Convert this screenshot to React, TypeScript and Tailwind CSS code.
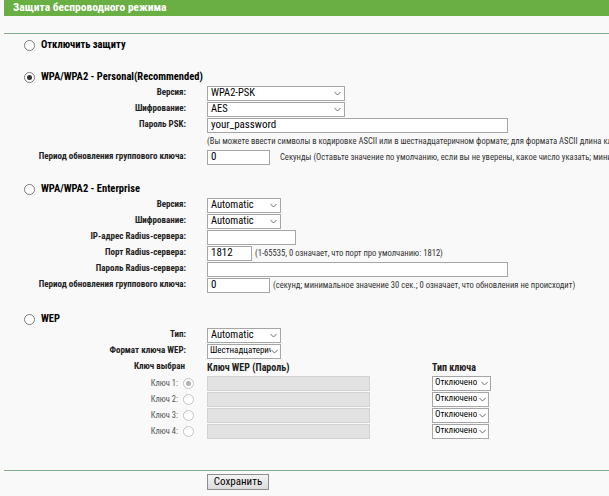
import type { ReactNode } from "react";

function Radio({ checked, disabled }: { checked?: boolean; disabled?: boolean }) {
  return (
    <span
      className={`flex h-[11px] w-[11px] flex-shrink-0 items-center justify-center rounded-full border bg-white ${
        disabled ? "border-[#c4c4c4]" : "border-[#7a7a7a]"
      }`}
    >
      {checked && <span className={`h-[5px] w-[5px] rounded-full ${disabled ? "bg-[#b0b0b0]" : "bg-[#333]"}`} />}
    </span>
  );
}

function Chevron() {
  return (
    <svg width="7" height="5" viewBox="0 0 7 5" className="flex-shrink-0">
      <path d="M0.5 1 L3.5 4 L6.5 1" fill="none" stroke="#6b6b6b" strokeWidth="1" />
    </svg>
  );
}

function Select({ value, width, small }: { value: string; width: string; small?: boolean }) {
  return (
    <div
      className={`flex h-[15px] items-center justify-between overflow-hidden border border-[#a6a6a6] bg-white text-black ${
        small ? "pl-[2px] pr-[2px] text-[9px]" : "pl-[3px] pr-[3px] text-[10.5px]"
      } ${width}`}
    >
      <span className="min-w-0 overflow-hidden whitespace-nowrap">{value}</span>
      <Chevron />
    </div>
  );
}

function Input({ value, width, disabled }: { value?: string; width: string; disabled?: boolean }) {
  return (
    <div
      className={`flex h-[15px] flex-shrink-0 items-center border pl-[3px] text-[11px] text-black ${width} ${
        disabled ? "border-[#d2d2d2] bg-[#e2e2e2]" : "border-[#a6a6a6] bg-white"
      }`}
    >
      {value}
    </div>
  );
}

function Row({ label, children }: { label?: ReactNode; children?: ReactNode }) {
  return (
    <div className="flex h-4 items-center whitespace-nowrap">
      <div className="w-[186px] flex-shrink-0 text-right text-[9px] font-bold text-[#222]">{label}</div>
      <div className="ml-[21px] flex items-center">{children}</div>
    </div>
  );
}

function Hint({ children, className = "" }: { children: ReactNode; className?: string }) {
  return <span className={`text-[8.6px] text-[#333] ${className}`}>{children}</span>;
}

function SectionTitle({ checked, children }: { checked?: boolean; children: ReactNode }) {
  return (
    <div className="flex h-4 items-center gap-[6px] pl-[24px] text-[10.5px] font-bold text-black">
      <Radio checked={checked} />
      <span>{children}</span>
    </div>
  );
}

function WepKey({ n, checked }: { n: number; checked?: boolean }) {
  return (
    <div className="flex h-4 items-center whitespace-nowrap">
      <div className="flex w-[194px] flex-shrink-0 items-center justify-end gap-[5px] text-[8.5px] text-[#555]">
        <span>Ключ {n}:</span>
        <Radio checked={checked} disabled />
      </div>
      <div className="ml-[13px] flex items-center">
        <Input width="w-[163px]" disabled />
        <div className="ml-[62px]">
          <Select value="Отключено" small width={n === 1 ? "w-[59px]" : "w-[57px]"} />
        </div>
      </div>
    </div>
  );
}

export default function App() {
  return (
    <div className="h-[496px] w-[609px] overflow-hidden bg-[#f9f9f9] font-['Roboto_Condensed','Liberation_Sans',sans-serif]">
      <div className="ml-1 flex h-4 items-center bg-[#6aaf43] pl-[9px] text-[11.5px] font-bold text-white">
        Защита беспроводного режима
      </div>
      <div className="ml-1 mt-[17px] border-t border-[#7fae8e]" />

      <div className="mt-[3px]">
        <SectionTitle>Отключить защиту</SectionTitle>
      </div>

      <div className="mt-4">
        <SectionTitle checked>WPA/WPA2 - Personal(Recommended)</SectionTitle>
        <Row label="Версия:">
          <Select value="WPA2-PSK" width="w-[138px]" />
        </Row>
        <Row label="Шифрование:">
          <Select value="AES" width="w-[138px]" />
        </Row>
        <Row label="Пароль PSK:">
          <Input value="your_password" width="w-[301px]" />
        </Row>
        <Row>
          <Hint>
            (Вы можете ввести символы в кодировке ASCII или в шестнадцатеричном формате; для формата ASCII длина ключа
            должна быть от 8 до 63 символов)
          </Hint>
        </Row>
        <Row label="Период обновления группового ключа:">
          <Input value="0" width="w-[63px]" />
          <Hint className="ml-[10px]">
            Секунды (Оставьте значение по умолчанию, если вы не уверены, какое число указать; минимальное значение 30)
          </Hint>
        </Row>
      </div>

      <div className="mt-4">
        <SectionTitle>WPA/WPA2 - Enterprise</SectionTitle>
        <Row label="Версия:">
          <Select value="Automatic" width="w-[74px]" />
        </Row>
        <Row label="Шифрование:">
          <Select value="Automatic" width="w-[74px]" />
        </Row>
        <Row label="IP-адрес Radius-сервера:">
          <Input width="w-[89px]" />
        </Row>
        <Row label="Порт Radius-сервера:">
          <Input value="1812" width="w-[45px]" />
          <Hint className="ml-[3px]">(1-65535, 0 означает, что порт про умолчанию: 1812)</Hint>
        </Row>
        <Row label="Пароль Radius-сервера:">
          <Input width="w-[301px]" />
        </Row>
        <Row label="Период обновления группового ключа:">
          <Input value="0" width="w-[63px]" />
          <Hint className="ml-[3px]">
            (секунд; минимальное значение 30 сек.; 0 означает, что обновления не происходит)
          </Hint>
        </Row>
      </div>

      <div className="mt-[18px]">
        <SectionTitle>WEP</SectionTitle>
        <Row label="Тип:">
          <Select value="Automatic" width="w-[74px]" />
        </Row>
        <Row label="Формат ключа WEP:">
          <Select value="Шестнадцатеричный" small width="w-[74px]" />
        </Row>
        <div className="flex h-4 items-center whitespace-nowrap font-bold text-[#222]">
          <div className="w-[185px] flex-shrink-0 text-right text-[9px]">Ключ выбран</div>
          <div className="ml-[22px] w-[225px] text-[10px]">Ключ WEP (Пароль)</div>
          <div className="text-[10px]">Тип ключа</div>
        </div>
        <WepKey n={1} checked />
        <WepKey n={2} />
        <WepKey n={3} />
        <WepKey n={4} />
      </div>

      <div className="ml-1 mt-[31px] border-t border-[#7fae8e]" />
      <div className="ml-[207px] mt-[3px] flex">
        <button
          type="button"
          className="flex h-4 w-[62px] items-center justify-center border border-[#8e8e8e] bg-gradient-to-b from-[#f4f4f4] to-[#dcdcdc] text-[11px] text-black"
        >
          Сохранить
        </button>
      </div>
    </div>
  );
}
